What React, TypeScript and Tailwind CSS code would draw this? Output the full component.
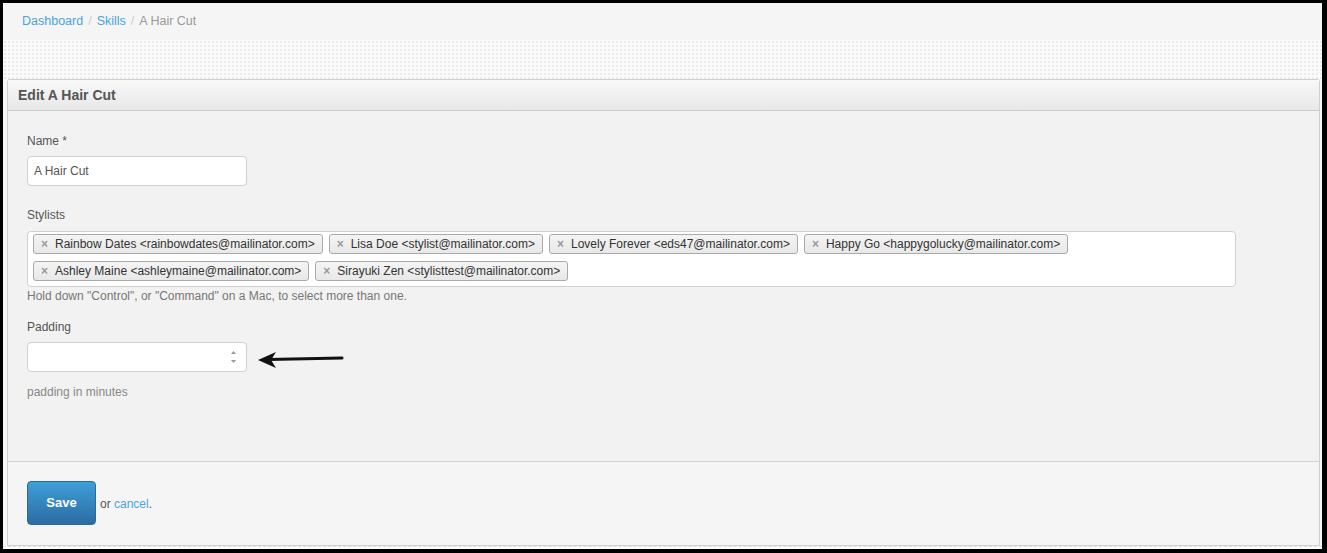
const STYLISTS = [
  "Rainbow Dates <rainbowdates@mailinator.com>",
  "Lisa Doe <stylist@mailinator.com>",
  "Lovely Forever <eds47@mailinator.com>",
  "Happy Go <happygolucky@mailinator.com>",
  "Ashley Maine <ashleymaine@mailinator.com>",
  "Sirayuki Zen <stylisttest@mailinator.com>",
];

function Tag({ label }: { label: string }) {
  return (
    <span className="flex items-center h-[20px] pl-[7px] pr-[7px] rounded-[3px] border border-[#aaa] bg-gradient-to-b from-[#f4f4f4] to-[#e8e8e8] text-[12px] text-[#333] leading-none">
      <span className="text-[#999] text-[12px] font-bold mr-[7px]">×</span>
      {label}
    </span>
  );
}

export default function App() {
  return (
    <div
      className="w-[1327px] h-[553px] bg-[#f7f7f7] border-black border-t-[3px] border-l-[3px] border-r-[5px] border-b-[4px] flex flex-col"
      style={{ fontFamily: '"Liberation Sans", Arial, sans-serif' }}
    >
      {/* Breadcrumbs */}
      <div className="h-[37px] shrink-0 flex items-center pl-[19px] text-[12.5px] bg-[#f5f5f5]">
        <a className="text-[#4aa3df]">Dashboard</a>
        <span className="text-[#ccc] px-[5px]">/</span>
        <a className="text-[#4aa3df]">Skills</a>
        <span className="text-[#ccc] px-[5px]">/</span>
        <span className="text-[#999]">A Hair Cut</span>
      </div>

      {/* Dotted strip */}
      <div className="h-[39px] shrink-0 bg-[#fafafa] bg-[radial-gradient(#ececec_1px,transparent_1px)] bg-[length:4px_4px]" />

      {/* Panel */}
      <div className="flex-1 ml-[4px] mr-[2px] border border-[#cfcfcf] rounded-t-[3px] flex flex-col">
        <div className="h-[31px] shrink-0 flex items-center pl-[10px] bg-gradient-to-b from-[#f8f8f8] to-[#e8e8e8] border-b border-[#ccc]">
          <h2 className="text-[14px] font-bold text-[#555]">Edit A Hair Cut</h2>
        </div>

        <div className="h-[350px] shrink-0 bg-[#f2f2f2] pl-[19px] pt-[22px] text-[12px] text-[#555]">
          <label className="block leading-[16px]">Name *</label>
          <div className="mt-[7px] w-[220px] h-[30px] bg-white border border-[#d0d0d0] rounded-[4px] flex items-center pl-[6px] text-[12px] text-[#555]">
            A Hair Cut
          </div>

          <label className="block leading-[16px] mt-[21px]">Stylists</label>
          <div className="mt-[8px] w-[1209px] h-[56px] bg-white border border-[#d0d0d0] rounded-[4px] pl-[5px] pt-[2px] pr-[5px] flex flex-wrap gap-x-[6px] gap-y-[7px] content-start">
            {STYLISTS.map((s) => (
              <Tag key={s} label={s} />
            ))}
          </div>
          <p className="mt-[1px] leading-[16px] text-[#777]">
            Hold down "Control", or "Command" on a Mac, to select more than one.
          </p>

          <label className="block leading-[16px] mt-[15px]">Padding</label>
          <div className="mt-[7px] flex items-start">
            <div className="w-[220px] h-[30px] bg-white border border-[#d0d0d0] rounded-[4px] flex items-center justify-end pr-[9px]">
              <svg width="7" height="16" viewBox="0 0 7 16">
                <path d="M3.5 2 L6 5 H1 Z" fill="#999" />
                <path d="M3.5 14 L6 11 H1 Z" fill="#999" />
              </svg>
            </div>
            <svg width="90" height="20" viewBox="0 0 90 20" className="ml-[11px] mt-[8px]">
              <path d="M10 9.5 L84 8" stroke="#111" strokeWidth="3" strokeLinecap="round" />
              <path d="M0 10 L18 2 L13 10 L18 18 Z" fill="#111" />
            </svg>
          </div>

          <p className="mt-[12px] leading-[16px] text-[#888]">padding in minutes</p>
        </div>

        {/* Actions */}
        <div className="flex-1 bg-[#f5f5f5] border-t border-[#d3d3d3] pl-[19px] pt-[19px] flex items-start text-[12px]">
          <button className="w-[69px] h-[44px] rounded-[4px] bg-gradient-to-b from-[#3e9fd8] to-[#2c6ca4] border border-[#2a6a9e] text-white font-bold text-[13px]">
            Save
          </button>
          <span className="ml-[4px] mt-[14px] text-[#555]">
            or <a className="text-[#4aa3df]">cancel</a>.
          </span>
        </div>
      </div>
      <div className="h-[3px] shrink-0 border-t border-dashed border-[#ddd] bg-white" />
    </div>
  );
}
